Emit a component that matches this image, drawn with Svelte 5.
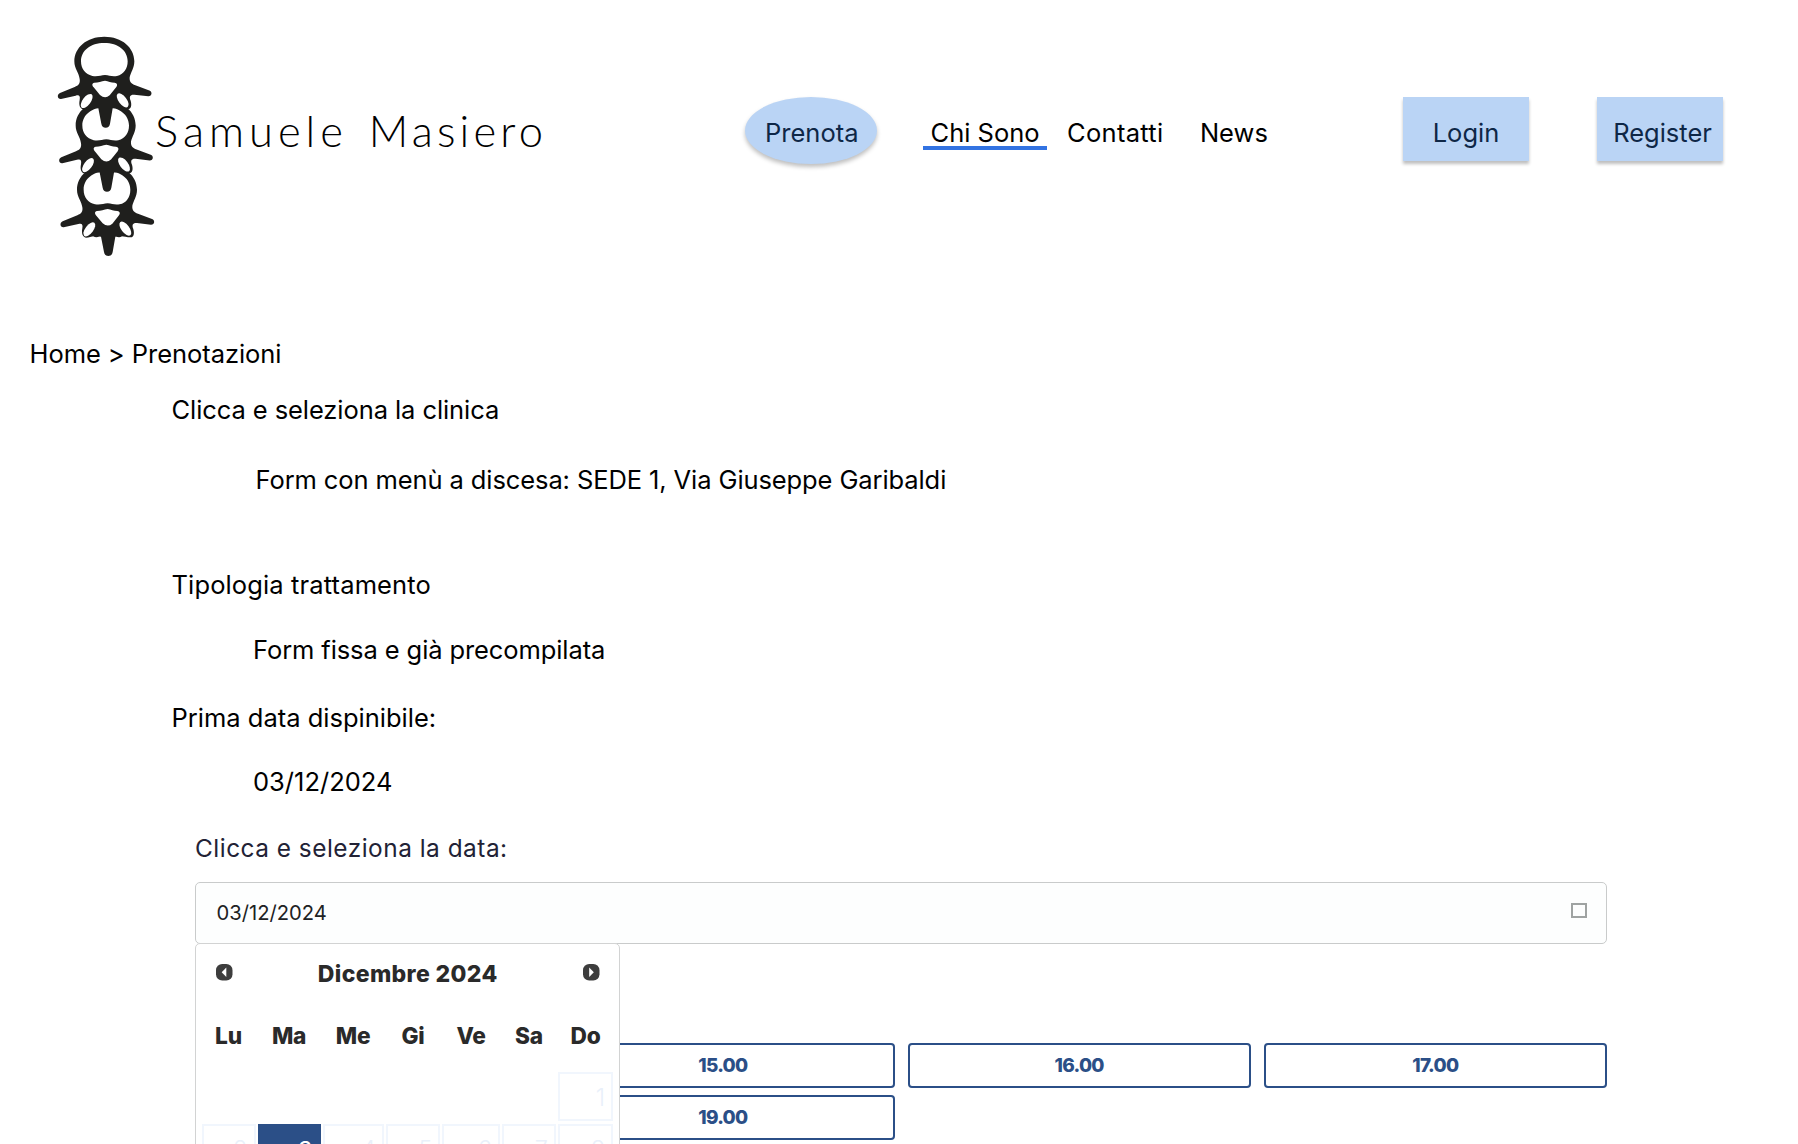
<script>
  const weekdays = ['Lu', 'Ma', 'Me', 'Gi', 'Ve', 'Sa', 'Do'];
  const weeks = [
    ['', '', '', '', '', '', '1'],
    ['2', '3', '4', '5', '6', '7', '8'],
  ];
  const selectedDay = '3';
  // The first column of slots is hidden under the open date picker.
  const slots = ['', '15.00', '16.00', '17.00', '', '19.00'];
</script>

{#snippet vertebra()}
  <path
    fill-rule="evenodd"
    d="M193 50 C246 50 283 83 283 124 C283 145 272 157 269 172 C268 186 274 192 286 196 L326 211
       C338 214 337 229 325 229 L283 224 C270 223 267 230 272 242 C276 256 273 267 264 267 C250 266 240 262 232 264
       L218 265 L210 311 Q208 323 197 323 Q186 323 184 311 L175 265 L160 264 C148 262 140 268 130 268
       C119 266 116 254 119 240 C121 228 118 224 107 227 L63 237 C52 238 50 223 60 219 L104 201
       C116 196 121 190 119 177 C117 158 103 147 103 124 C103 83 140 50 193 50 Z
       M193 69 C151 69 123 92 123 124 C123 146 136 163 157 168 C175 171 182 165 195 165 C208 165 214 171 231 168
       C251 164 263 146 263 124 C263 92 235 69 193 69 Z
       M195 182 C184 184 175 188 163 188 C155 189 156 197 161 202 L180 225 Q195 238 209 226 L229 201
       C234 195 231 189 224 188 C213 188 205 184 195 182 Z"
  />
  <ellipse cx="140" cy="243" rx="12" ry="25" transform="rotate(37 140 243)" fill="#fff" />
  <ellipse cx="248" cy="241" rx="12" ry="25" transform="rotate(-37 248 241)" fill="#fff" />
{/snippet}

<div class="page">
  <header>
    <div class="brand">
      <svg class="spine" viewBox="0 0 390 750" fill="#1f1f1d" aria-hidden="true">
        <g transform="translate(8 385)">
          <circle cx="161" cy="257" r="10" />
          <circle cx="229" cy="257" r="10" />
          {@render vertebra()}
        </g>
        <g transform="translate(4 192.5)">{@render vertebra()}</g>
        {@render vertebra()}
      </svg>
      <span class="name">Samuele <span class="surname">Masiero</span></span>
    </div>
    <nav>
      <a class="pill" href="#prenota">Prenota</a>
      <a class="link active" href="#chi-sono">Chi Sono</a>
      <a class="link contacts" href="#contatti">Contatti</a>
      <a class="link" href="#news">News</a>
    </nav>
    <div class="account">
      <button class="box">Login</button>
      <button class="box">Register</button>
    </div>
  </header>

  <main>
    <p class="crumbs">Home &gt; Prenotazioni</p>
    <p class="field first">Clicca e seleziona la clinica</p>
    <p class="value clinic">Form con menù a discesa: SEDE 1, Via Giuseppe Garibaldi</p>
    <p class="field treatment">Tipologia trattamento</p>
    <p class="value kind">Form fissa e già precompilata</p>
    <p class="field date">Prima data dispinibile:</p>
    <p class="value day">03/12/2024</p>

    <section class="booking">
      <p class="label">Clicca e seleziona la data:</p>
      <div class="input">
        <span>03/12/2024</span>
        <i class="glyph"></i>
        <div class="picker">
          <div class="picker-head">
            <svg viewBox="0 0 16 16"><rect width="16" height="16" rx="6" fill="#3d3d3d" /><path d="M10 3.5v9L5.500 8z" fill="#fff" /></svg>
            <b>Dicembre 2024</b>
            <svg viewBox="0 0 16 16"><rect width="16" height="16" rx="6" fill="#3d3d3d" /><path d="M6 3.5v9L10.500 8z" fill="#fff" /></svg>
          </div>
          <div class="grid names">
            {#each weekdays as name}<b>{name}</b>{/each}
          </div>
          {#each weeks as week}
            <div class="grid week">
              {#each week as day}
                <span class:cell={day} class:selected={day === selectedDay}>{day}</span>
              {/each}
            </div>
          {/each}
        </div>
      </div>
      <div class="slots">
        {#each slots as slot}<div class="slot">{slot}</div>{/each}
      </div>
    </section>
  </main>
</div>

<style>
  :global(body) { background: #fff; overflow: hidden; }
  .page {
    width: 1798px;
    height: 1144px;
    overflow: hidden;
    background: #fff;
    color: #000;
    font: 25.5px/32px Inter, sans-serif;
  }
  p { margin: 0; white-space: nowrap; }

  header { display: flex; align-items: flex-start; height: 338px; }
  .brand { display: flex; width: 745px; padding: 20px 0 0 40px; box-sizing: border-box; }
  .spine { flex: none; width: 130px; height: 250px; margin-right: -15px; }
  .name {
    padding-top: 84px;
    font: 300 43.5px/52px Lato, sans-serif;
    letter-spacing: 5px;
    word-spacing: 4px;
    white-space: nowrap;
  }
  .surname { letter-spacing: 4.2px; }
  nav { display: flex; padding-top: 97px; width: 658px; }
  a { color: #000; text-decoration: none; white-space: nowrap; }
  .pill {
    width: 132px;
    height: 67px;
    padding: 20px 0 0 20px;
    box-sizing: border-box;
    border-radius: 50%;
    background: #bad4f5;
    color: #0e2747;
    box-shadow: 0 3px 4px rgba(0, 0, 0, 0.25);
  }
  .link { margin: 20px 0 0 20px; height: 32px; }
  .link.active {
    width: 124px;
    margin-left: 46px;
    padding-left: 7.5px;
    box-sizing: border-box;
    box-shadow: 0 1px 0 #3273e2;
    border-bottom: 3px solid #3273e2;
  }
  .contacts { letter-spacing: 0.3px; }
  .link + .link + .link { margin-left: 36.5px; }
  .account { display: flex; gap: 68px; padding-top: 97px; }
  .box {
    width: 126px;
    height: 64px;
    padding: 8px 0 0;
    border: 0;
    background: #bad4f5;
    color: #0e2747;
    font: inherit;
    text-align: center;
    box-shadow: 0 3px 3px rgba(0, 0, 0, 0.25);
  }
  .box + .box { padding-left: 5px; }

  .crumbs { padding-left: 29.5px; letter-spacing: -0.05px; }
  .field { padding-left: 171.5px; }
  .value { padding-left: 253px; }
  .first { margin-top: 24px; letter-spacing: -0.08px; }
  .clinic { margin-top: 38px; padding-left: 255.5px; letter-spacing: -0.1px; }
  .treatment { margin-top: 73px; letter-spacing: 0.13px; }
  .kind { margin-top: 33px; letter-spacing: -0.1px; }
  .date { margin-top: 36px; }
  .day { margin-top: 32px; }

  .booking { width: 1412px; margin: 34px 0 0 195px; }
  .label { font-size: 24.4px; letter-spacing: 0.5px; color: #222235; margin-bottom: 18px; }
  .input {
    position: relative;
    display: flex;
    align-items: center;
    justify-content: space-between;
    height: 62px;
    padding: 0 19px 0 20.5px;
    box-sizing: border-box;
    border: 1.5px solid #c9cbcb;
    border-radius: 5px;
    background: #fdfefe;
    color: #202224;
    font-size: 20.2px;
  }
  .glyph { width: 16px; height: 15px; margin-bottom: 5px; box-sizing: border-box; border: 2.5px solid #9fa3a2; }

  .picker {
    position: absolute;
    z-index: 2;
    top: 60px;
    left: -1px;
    width: 425px;
    height: 260px;
    box-sizing: border-box;
    border: 1.5px solid #d2d3d3;
    border-radius: 5px 5px 0 0;
    background: #fff;
    color: #2a2a2a;
  }
  .picker-head { display: flex; justify-content: space-between; padding: 14px 19.5px 0 20px; height: 48px; box-sizing: border-box; }
  .picker-head svg { width: 16.5px; height: 16.5px; margin-top: 6px; }
  .picker-head b { font-size: 23px; font-weight: 800; line-height: 32px; letter-spacing: 0.35px; }
  .grid {
    display: grid;
    grid-template-columns: 54px 63px 61px 54.5px 57.5px 54px 55px;
    column-gap: 2.1px;
    padding-left: 5.5px;
  }
  .names { padding-top: 28px; height: 80px; box-sizing: border-box; text-align: center; font-size: 22.7px; }
  .names b { margin: 0 -3px; font-weight: 800; letter-spacing: -0.2px; }
  .week { height: 49px; margin-bottom: 3px; text-align: right; font-size: 23.5px; color: #e9f0fa; font-weight: 300; }
  .week span { padding: 8px 6px 0 0; }
  .week .cell { border: 2px solid #f1f6fd; }
  .week .selected { background: #2b4f87; border-color: #2b4f87; color: #fff; font-weight: 400; }

  .slots {
    display: grid;
    grid-template-columns: repeat(4, 1fr);
    gap: 7px 13px;
    margin-top: 99px;
  }
  .slot {
    height: 45px;
    box-sizing: border-box;
    border: 2px solid #2b4f87;
    border-radius: 4px;
    color: #2b4f87;
    font-size: 19px;
    font-weight: 800;
    line-height: 41px;
    letter-spacing: -0.7px;
    text-align: center;
  }
</style>
